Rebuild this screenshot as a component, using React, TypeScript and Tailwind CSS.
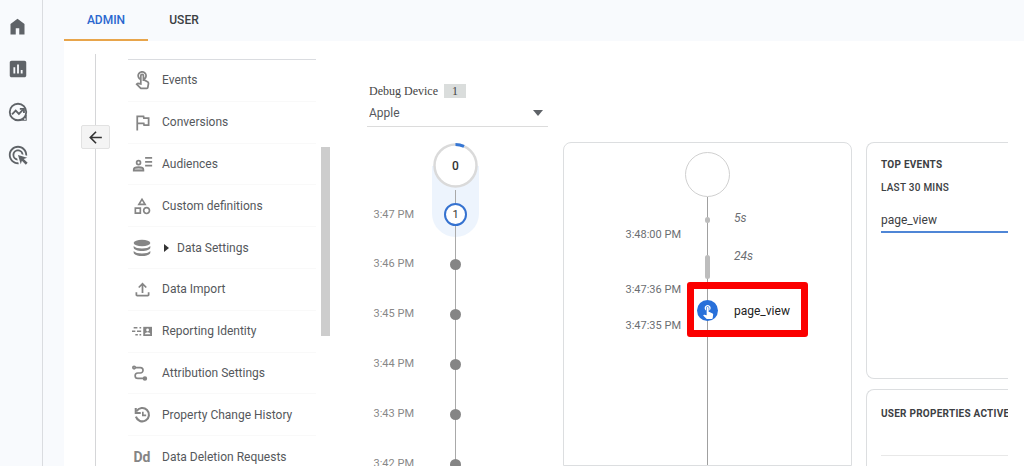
import type { ReactNode } from "react";
import {
  MdAdsClick,
  MdArrowBack,
  MdInsertChart,
  MdOutlineCategory,
  MdOutlineFileUpload,
  MdOutlineFlag,
  MdOutlineTouchApp,
  MdTouchApp,
} from "react-icons/md";

function HomeIcon() {
  return (
    <svg className="size-[21px]" viewBox="0 0 24 24" fill="currentColor" aria-hidden>
      <path d="M4 21V9l8-6 8 6v12h-6v-7h-4v7z" />
    </svg>
  );
}

function ExploreIcon() {
  return (
    <svg className="size-[22px]" viewBox="0 0 24 24" fill="none" stroke="currentColor" aria-hidden>
      <circle cx="12" cy="12" r="9" strokeWidth="2" />
      <path d="M5.5 14.5l4-4 3.5 3.5 4.5-4.5" strokeWidth="2" />
      <path d="M14 8.5h4.5V13" strokeWidth="2" />
      <path d="M21.5 15v6.5H15l2-2.2 2.4-2.2z" fill="currentColor" stroke="none" />
      <circle cx="19.6" cy="19.7" r="1" fill="#f8fafd" stroke="none" />
    </svg>
  );
}

function AudienceIcon() {
  return (
    <svg className="size-[21px]" viewBox="0 0 24 24" fill="none" stroke="currentColor" strokeWidth="2" aria-hidden>
      <circle cx="7.5" cy="11" r="2.2" />
      <path d="M2 20v-1c0-1.800 3-2.800 5.500-2.800s5.500 1 5.500 2.800v1z" fill="currentColor" fillOpacity="0.5" />
      <path d="M15 5.500h8M15 10h8M15 14.500h8" />
    </svg>
  );
}

function DatabaseIcon() {
  return (
    <svg className="size-5" viewBox="0 0 24 24" fill="currentColor" aria-hidden>
      <ellipse cx="12" cy="6" rx="10" ry="4" />
      <path d="M2 9.500c1.500 2 5.500 3 10 3s8.500-1 10-3v2c0 2.500-4.500 4.200-10 4.200S2 14 2 11.500z" />
      <path d="M2 15.500c1.500 2 5.500 3 10 3s8.500-1 10-3v2c0 2.500-4.500 4.200-10 4.200S2 20 2 17.500z" />
    </svg>
  );
}

function IdentityIcon() {
  return (
    <svg className="size-5" viewBox="0 0 24 24" fill="none" stroke="currentColor" strokeWidth="1.800" aria-hidden>
      <path d="M2 8h4.500M9 8h2M0 12.300h4M6 12.300h5M4 16.500h3M9 16.500h2" />
      <path d="M13.500 7h10.500v11H13.500z" fill="currentColor" stroke="none" />
      <circle cx="18.700" cy="10.800" r="1.700" fill="#fff" stroke="none" />
      <path d="M15.500 16c0-1.500 1.700-2.400 3.200-2.400s3.300.9 3.300 2.400z" fill="#fff" stroke="none" />
    </svg>
  );
}

function AttributionIcon() {
  return (
    <svg className="size-5" viewBox="0 0 24 24" fill="none" stroke="currentColor" strokeWidth="2" aria-hidden>
      <circle cx="2.500" cy="5.500" r="1.500" />
      <circle cx="15.500" cy="18.500" r="1.700" fill="currentColor" />
      <path d="M4 5.500h6a3.200 3.200 0 010 6.500H7a3.200 3.200 0 000 6.500h8" />
    </svg>
  );
}

function HistoryIcon() {
  return (
    <svg className="size-5" viewBox="0 0 24 24" fill="none" stroke="currentColor" strokeWidth="2.500" aria-hidden>
      <path d="M5.500 7.500a8 8 0 11-.8 6.500" />
      <path d="M4.500 3.500v6h6" />
      <path d="M13 8v4.500h4" strokeWidth="2" />
    </svg>
  );
}

type MenuItem = { label: string; icon: ReactNode; nested?: boolean };

const MENU: MenuItem[] = [
  { label: "Events", icon: <MdOutlineTouchApp className="size-[21px]" /> },
  { label: "Conversions", icon: <MdOutlineFlag className="size-[21px]" /> },
  { label: "Audiences", icon: <AudienceIcon /> },
  { label: "Custom definitions", icon: <MdOutlineCategory className="size-5" /> },
  { label: "Data Settings", icon: <DatabaseIcon />, nested: true },
  { label: "Data Import", icon: <MdOutlineFileUpload className="size-[21px]" /> },
  { label: "Reporting Identity", icon: <IdentityIcon /> },
  { label: "Attribution Settings", icon: <AttributionIcon /> },
  { label: "Property Change History", icon: <HistoryIcon /> },
  { label: "Data Deletion Requests", icon: <span className="text-sm font-bold">Dd</span> },
];

const MINUTES = ["3:47 PM", "3:46 PM", "3:45 PM", "3:44 PM", "3:43 PM", "3:42 PM"];

function Rail() {
  return (
    <aside className="flex w-[43px] shrink-0 flex-col items-center gap-[21px] border-r border-[#dadce0] pt-4 pr-[7px] text-[#5f6368]">
      <button aria-label="Home"><HomeIcon /></button>
      <button aria-label="Reports"><MdInsertChart className="size-[22px]" /></button>
      <button aria-label="Explore"><ExploreIcon /></button>
      <button aria-label="Advertising"><MdAdsClick className="size-[22px]" /></button>
    </aside>
  );
}

function SettingsMenu() {
  return (
    <nav className="mt-[18px] w-[188px] shrink-0 border-t border-[#dadce0]">
      <ul className="flex h-[417px] flex-col divide-y divide-[#f9f9f9]">
        {MENU.map(({ label, icon, nested }) => (
          <li key={label} className="flex-1">
            <a href="#" className="flex h-full items-center text-[#55585c]">
              <span className="flex w-7 shrink-0 justify-center text-[#858585]">{icon}</span>
              {nested && (
                <svg className="ml-2 h-2 w-[5px] shrink-0" viewBox="0 0 5 8" fill="#333" aria-hidden>
                  <path d="M0 0l5 4-5 4z" />
                </svg>
              )}
              <span className={nested ? "ml-2 text-xs whitespace-nowrap" : "ml-[6px] text-xs whitespace-nowrap"}>
                {label}
              </span>
            </a>
          </li>
        ))}
      </ul>
    </nav>
  );
}

function MinuteStream() {
  return (
    <section className="w-[181px] shrink-0 pt-[42px]">
      <label htmlFor="device" className="flex items-center pl-[2px] font-['Liberation_Serif',serif] text-xs leading-4 text-[#444]">
        Debug Device
        <span className="ml-[6px] w-[22px] bg-[#dadddc] text-center leading-[14px]">1</span>
      </label>
      <div className="relative border-b border-[#dcdcdc]">
        <select id="device" className="h-[27px] w-full appearance-none bg-transparent pl-[2px] text-xs text-[#55585c]">
          <option>Apple</option>
        </select>
        <svg
          className="pointer-events-none absolute top-[11px] right-[5px] h-[6px] w-[10px]"
          viewBox="0 0 10 6"
          fill="#5f6368"
          aria-hidden
        >
          <path d="M0 0h10L5 6z" />
        </svg>
      </div>

      <div className="relative mt-[15px] pl-[65px]">
        <div className="absolute top-[24px] left-[65px] h-[71px] w-[47px] rounded-b-full bg-[#edf4fd]" />
        <div className="relative flex size-[47px] items-center justify-center">
          <svg className="absolute inset-0 size-full" viewBox="0 0 47 47" fill="none" aria-hidden>
            <circle cx="23.5" cy="23.5" r="21" fill="#fff" stroke="#dadada" strokeWidth="2.5" />
            <path d="M23.500 2.500a21 21 0 018.500 1.800" stroke="#3576d4" strokeWidth="3" />
          </svg>
          <span className="relative text-xs font-medium text-[#333]">0</span>
        </div>
      </div>

      <ol className="relative mt-px flex h-[299px] flex-col">
        <li aria-hidden className="absolute top-0 bottom-0 left-[88px] w-px bg-[#a9a9a9]" />
        {MINUTES.map((time, i) => (
          <li key={time} className="relative flex flex-1 items-center">
            <time className="w-[47px] text-right text-[11px] text-[#888]">{time}</time>
            <span className="ml-[18px] flex w-[47px] justify-center">
              {i === 0 ? (
                <button className="size-[23px] rounded-full border-2 border-[#3572d0] bg-white text-[11px] leading-none text-[#333]">
                  1
                </button>
              ) : (
                <span className="size-[11px] rounded-full bg-[#858585]" />
              )}
            </span>
          </li>
        ))}
      </ol>
    </section>
  );
}

function SecondStream() {
  return (
    <section className="relative mt-[101px] ml-[15px] grid w-[289px] shrink-0 grid-cols-[117px_53px_1fr] rounded-t-lg border border-[#dcdee0] text-xs">
      <div className="flex flex-col pt-[84px] text-right text-[11px] leading-4 text-[#6b6e72]">
        <time>3:48:00 PM</time>
        <time className="mt-[39px]">3:47:36 PM</time>
        <time className="mt-5">3:47:35 PM</time>
      </div>
      <div className="flex flex-col items-center pt-[9px]">
        <div className="size-[45px] shrink-0 rounded-full border border-[#d0d0d0]" />
        <div className="relative flex w-full flex-1 flex-col items-center">
          <div className="absolute inset-y-0 w-px bg-[#a0a0a0]" />
          <div className="relative mt-5 h-[6px] w-[5px] rounded-full bg-[#bdbdbd]" />
          <div className="relative mt-8 h-6 w-[5px] rounded-full bg-[#bdbdbd]" />
          <div className="relative mt-[21px] flex size-[21px] items-center justify-center rounded-full bg-[#2870da] text-white">
            <MdTouchApp className="size-4" />
          </div>
        </div>
      </div>
      <div className="flex flex-col pt-[67px] leading-4">
        <em className="text-[#6b6e72]">5s</em>
        <em className="mt-[22px] text-[#6b6e72]">24s</em>
        <button className="mt-[39px] self-start text-[#222]">page_view</button>
      </div>
      <div className="pointer-events-none absolute top-[139px] left-[123px] h-[55px] w-[121px] rounded-[3px] border-7 border-[#fb0000]" />
    </section>
  );
}

function Summary() {
  return (
    <aside className="mt-[101px] mr-4 ml-[14px] flex min-w-0 flex-1 flex-col gap-[10px] overflow-hidden whitespace-nowrap text-[#3c4043]">
      <section className="h-[237px] shrink-0 rounded-l-lg border border-r-0 border-[#dcdee0] pt-[14px] pl-[14px]">
        <h2 className="text-[10px] leading-4 font-bold tracking-wide">TOP EVENTS</h2>
        <h3 className="mt-[7px] text-[10px] leading-4 font-medium tracking-wide">LAST 30 MINS</h3>
        <div className="mt-4 border-b-2 border-[#4f86d6] pb-[3px] text-xs leading-4">page_view</div>
      </section>
      <section className="flex-1 rounded-tl-lg border border-r-0 border-b-0 border-[#dcdee0] pt-4 pl-[14px]">
        <h2 className="text-[10px] leading-4 font-bold tracking-wide">USER PROPERTIES ACTIVE</h2>
        <div className="mt-[33px] border-t border-[#e8e8e8]" />
      </section>
    </aside>
  );
}

export default function App() {
  return (
    <div className="flex h-screen overflow-hidden bg-[#f8fafd] font-['Roboto',sans-serif]">
      <Rail />
      <div className="flex min-w-0 flex-1 flex-col pl-[21px]">
        <header className="flex h-[41px] shrink-0 text-xs font-medium">
          <button className="w-[84px] border-b-2 border-[#e8a54b] text-[#2a67cf]">ADMIN</button>
          <button className="w-[72px] border-b-2 border-transparent text-[#3c4043]">USER</button>
        </header>
        <main className="flex min-h-0 flex-1 overflow-hidden bg-white">
          <div className="mr-[2px] flex w-[62px] shrink-0 flex-col items-center pt-[13px]">
            <div className="h-[71px] w-px bg-[#d5d6d8]" />
            <button
              aria-label="Back"
              className="flex h-6 w-[29px] shrink-0 items-center justify-center rounded-xs border border-[#e2e2e2] bg-[#f4f4f4] text-[#333]"
            >
              <MdArrowBack className="size-[19px]" />
            </button>
            <div className="w-px flex-1 bg-[#d5d6d8]" />
          </div>
          <SettingsMenu />
          <div className="mt-[106px] ml-[5px] h-[189px] w-[9px] shrink-0 bg-[#cdcdcd]" />
          <div className="w-[37px] shrink-0" />
          <MinuteStream />
          <SecondStream />
          <Summary />
        </main>
      </div>
    </div>
  );
}
